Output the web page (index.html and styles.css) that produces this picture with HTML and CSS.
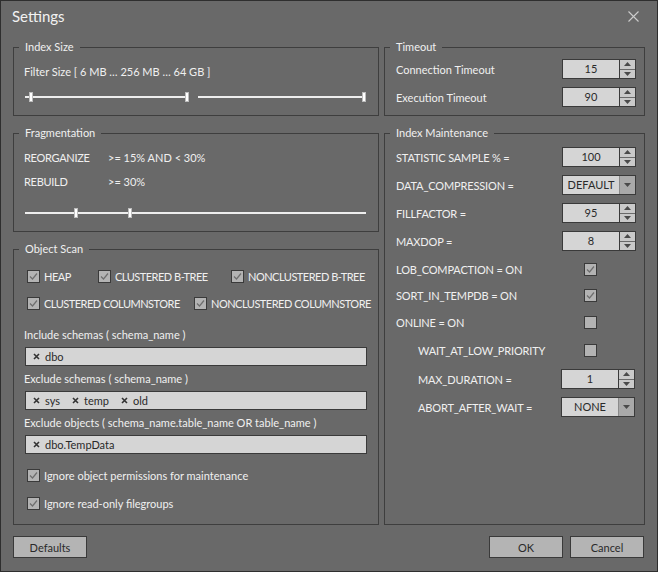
FILE: index.html
```html
<!DOCTYPE html>
<html>
<head>
<meta charset="utf-8">
<title>Settings</title>
<link rel="stylesheet" href="styles.css">
</head>
<body>
<div class="dialog">
  <div class="titlebar">
    <span class="title">Settings</span>
    <svg class="close" width="11" height="11" viewBox="0 0 11 11"><path d="M0.5 0.5L10.5 10.5M10.5 0.5L0.5 10.5"/></svg>
  </div>

  <div class="body">
    <div class="col col-left">
      <fieldset class="group">
        <legend>Index Size</legend>
        <div class="gb gb-index">
          <div class="row">Filter Size [ 6 MB … 256 MB … 64 GB ]</div>
          <div class="row slider-row">
            <div class="slider s-a"><span class="thumb" style="left:4px"></span><span class="thumb" style="right:0"></span></div>
            <div class="slider s-b"><span class="thumb" style="right:0"></span></div>
          </div>
        </div>
      </fieldset>

      <fieldset class="group">
        <legend>Fragmentation</legend>
        <div class="gb gb-frag">
          <div class="row frag-row"><span class="caps">REORGANIZE</span><span>&gt;= 15% AND &lt; 30%</span></div>
          <div class="row frag-row frag-row-2"><span class="caps">REBUILD</span><span>&gt;= 30%</span></div>
          <div class="row frag-slider">
            <div class="slider s-full"><span class="thumb" style="left:49px"></span><span class="thumb" style="left:103px"></span></div>
          </div>
        </div>
      </fieldset>

      <fieldset class="group">
        <legend>Object Scan</legend>
        <div class="gb gb-scan">
          <div class="cb-row cb-row-1 caps-tight">
            <label class="check"><span class="cb"><svg viewBox="0 0 11 11" width="11" height="11"><path d="M2 5.5L4.5 8L9 2.5"/></svg></span>HEAP</label>
            <label class="check"><span class="cb"><svg viewBox="0 0 11 11" width="11" height="11"><path d="M2 5.5L4.5 8L9 2.5"/></svg></span>CLUSTERED B-TREE</label>
            <label class="check"><span class="cb"><svg viewBox="0 0 11 11" width="11" height="11"><path d="M2 5.5L4.5 8L9 2.5"/></svg></span>NONCLUSTERED B-TREE</label>
          </div>
          <div class="cb-row cb-row-2 caps-tight">
            <label class="check"><span class="cb"><svg viewBox="0 0 11 11" width="11" height="11"><path d="M2 5.5L4.5 8L9 2.5"/></svg></span>CLUSTERED COLUMNSTORE</label>
            <label class="check"><span class="cb"><svg viewBox="0 0 11 11" width="11" height="11"><path d="M2 5.5L4.5 8L9 2.5"/></svg></span>NONCLUSTERED COLUMNSTORE</label>
          </div>

          <div class="field-label first">Include schemas ( schema_name )</div>
          <div class="tags">
            <span class="tag"><svg class="x" width="7" height="7" viewBox="0 0 7 7"><path d="M1 1L6 6M6 1L1 6"/></svg>dbo</span>
          </div>

          <div class="field-label">Exclude schemas ( schema_name )</div>
          <div class="tags">
            <span class="tag"><svg class="x" width="7" height="7" viewBox="0 0 7 7"><path d="M1 1L6 6M6 1L1 6"/></svg>sys</span>
            <span class="tag"><svg class="x" width="7" height="7" viewBox="0 0 7 7"><path d="M1 1L6 6M6 1L1 6"/></svg>temp</span>
            <span class="tag"><svg class="x" width="7" height="7" viewBox="0 0 7 7"><path d="M1 1L6 6M6 1L1 6"/></svg>old</span>
          </div>

          <div class="field-label">Exclude objects ( schema_name.table_name OR table_name )</div>
          <div class="tags">
            <span class="tag"><svg class="x" width="7" height="7" viewBox="0 0 7 7"><path d="M1 1L6 6M6 1L1 6"/></svg>dbo.TempData</span>
          </div>

          <div class="cb-row opt opt-1">
            <label class="check"><span class="cb"><svg viewBox="0 0 11 11" width="11" height="11"><path d="M2 5.5L4.5 8L9 2.5"/></svg></span>Ignore object permissions for maintenance</label>
          </div>
          <div class="cb-row opt opt-2">
            <label class="check"><span class="cb"><svg viewBox="0 0 11 11" width="11" height="11"><path d="M2 5.5L4.5 8L9 2.5"/></svg></span>Ignore read-only filegroups</label>
          </div>
        </div>
      </fieldset>
    </div>

    <div class="col col-right">
      <fieldset class="group">
        <legend>Timeout</legend>
        <div class="gb gb-timeout">
          <div class="mrow">
            <span>Connection Timeout</span>
            <div class="spin"><span class="spin-val">15</span><span class="spin-btns"><span><svg width="7" height="4" viewBox="0 0 7 4"><path d="M0 4L3.5 0L7 4Z"/></svg></span><span><svg width="7" height="4" viewBox="0 0 7 4"><path d="M0 0L3.5 4L7 0Z"/></svg></span></span></div>
          </div>
          <div class="mrow m8">
            <span>Execution Timeout</span>
            <div class="spin"><span class="spin-val">90</span><span class="spin-btns"><span><svg width="7" height="4" viewBox="0 0 7 4"><path d="M0 4L3.5 0L7 4Z"/></svg></span><span><svg width="7" height="4" viewBox="0 0 7 4"><path d="M0 0L3.5 4L7 0Z"/></svg></span></span></div>
          </div>
        </div>
      </fieldset>

      <fieldset class="group grow">
        <legend>Index Maintenance</legend>
        <div class="gb gb-maint caps-soft">
          <div class="mrow">
            <span>STATISTIC SAMPLE % =</span>
            <div class="spin"><span class="spin-val">100</span><span class="spin-btns"><span><svg width="7" height="4" viewBox="0 0 7 4"><path d="M0 4L3.5 0L7 4Z"/></svg></span><span><svg width="7" height="4" viewBox="0 0 7 4"><path d="M0 0L3.5 4L7 0Z"/></svg></span></span></div>
          </div>
          <div class="mrow m8">
            <span>DATA_COMPRESSION =</span>
            <div class="combo"><span class="combo-val">DEFAULT</span><span class="combo-btn"><svg width="7" height="4" viewBox="0 0 7 4"><path d="M0 0L3.5 4L7 0Z"/></svg></span></div>
          </div>
          <div class="mrow m8">
            <span>FILLFACTOR =</span>
            <div class="spin"><span class="spin-val">95</span><span class="spin-btns"><span><svg width="7" height="4" viewBox="0 0 7 4"><path d="M0 4L3.5 0L7 4Z"/></svg></span><span><svg width="7" height="4" viewBox="0 0 7 4"><path d="M0 0L3.5 4L7 0Z"/></svg></span></span></div>
          </div>
          <div class="mrow m8">
            <span>MAXDOP =</span>
            <div class="spin"><span class="spin-val">8</span><span class="spin-btns"><span><svg width="7" height="4" viewBox="0 0 7 4"><path d="M0 4L3.5 0L7 4Z"/></svg></span><span><svg width="7" height="4" viewBox="0 0 7 4"><path d="M0 0L3.5 4L7 0Z"/></svg></span></span></div>
          </div>
          <div class="mrow m8">
            <span>LOB_COMPACTION = ON</span>
            <div class="cb-cell"><span class="cb"><svg viewBox="0 0 11 11" width="11" height="11"><path d="M2 5.5L4.5 8L9 2.5"/></svg></span></div>
          </div>
          <div class="mrow m6">
            <span>SORT_IN_TEMPDB = ON</span>
            <div class="cb-cell"><span class="cb"><svg viewBox="0 0 11 11" width="11" height="11"><path d="M2 5.5L4.5 8L9 2.5"/></svg></span></div>
          </div>
          <div class="mrow m7">
            <span>ONLINE = ON</span>
            <div class="cb-cell"><span class="cb"></span></div>
          </div>
          <div class="mrow m8 indent">
            <span>WAIT_AT_LOW_PRIORITY</span>
            <div class="cb-cell"><span class="cb"></span></div>
          </div>
          <div class="mrow m9 indent">
            <span>MAX_DURATION =</span>
            <div class="spin shift"><span class="spin-val">1</span><span class="spin-btns"><span><svg width="7" height="4" viewBox="0 0 7 4"><path d="M0 4L3.5 0L7 4Z"/></svg></span><span><svg width="7" height="4" viewBox="0 0 7 4"><path d="M0 0L3.5 4L7 0Z"/></svg></span></span></div>
          </div>
          <div class="mrow m8 indent">
            <span>ABORT_AFTER_WAIT =</span>
            <div class="combo shift"><span class="combo-val">NONE</span><span class="combo-btn"><svg width="7" height="4" viewBox="0 0 7 4"><path d="M0 0L3.5 4L7 0Z"/></svg></span></div>
          </div>
        </div>
      </fieldset>
    </div>
  </div>

  <div class="footer">
    <button class="btn btn-defaults">Defaults</button>
    <button class="btn">OK</button>
    <button class="btn">Cancel</button>
  </div>
</div>
</body>
</html>
```

FILE: styles.css
```css
* { box-sizing: border-box; }
html, body { margin: 0; padding: 0; }
body {
  background: #696969;
  font-family: Lato, "Liberation Sans", sans-serif;
  font-size: 11px;
  color: #f0f0f0;
}
.dialog {
  width: 658px;
  height: 572px;
  border: 1px solid #2e2e2e;
  display: flex;
  flex-direction: column;
}
.titlebar {
  height: 39px;
  flex: none;
  display: flex;
  justify-content: space-between;
  align-items: flex-start;
  padding: 6px 18px 0 11px;
}
.title { font-size: 15px; line-height: 18px; color: #f2f2f2; }
.close { margin-top: 4px; fill: none; stroke: #cdcdcd; stroke-width: 1.1; }

.body { display: flex; gap: 5px; padding: 0 12px; }
.col { display: flex; flex-direction: column; gap: 10px; }
.col-left { width: 366px; }
.col-right { width: 261px; }

.group {
  margin: 0;
  padding: 0;
  border: 1px solid #3e3e3e;
  min-width: 0;
}
.group legend {
  margin-left: 5px;
  padding: 0 6px;
  line-height: 14px;
  color: #f0f0f0;
}
.grow { flex: 1; }
.gb { display: flex; flex-direction: column; }

.row { height: 20px; display: flex; align-items: center; }
.caps { letter-spacing: -0.3px; }
.caps-tight { letter-spacing: -0.5px; }
.caps-soft > .mrow > span:first-child { letter-spacing: -0.15px; }

/* Index size */
.gb-index { padding: 7px 11px 8px 10px; }
.slider-row { margin-top: 6px; gap: 9px; padding-left: 1px; align-items: stretch; }
.slider {
  position: relative;
  height: 20px;
  background: linear-gradient(#eeeeee, #eeeeee) 0 9px / 100% 2px no-repeat;
}
.s-a { width: 164px; flex: none; }
.s-b { flex: 1; margin-right: 1px; }
.s-full { flex: 1; margin-left: 1px; margin-right: 1px; }
.thumb {
  position: absolute;
  top: 5px;
  width: 4px;
  height: 10px;
  background: #ffffff;
  border: 1px solid #bdbdbd;
}

/* Fragmentation */
.gb-frag { padding: 7px 11px 8px 10px; }
.frag-row { display: grid; grid-template-columns: 84px auto; align-items: center; }
.frag-row-2 { margin-top: 4px; }
.frag-slider { margin-top: 12px; align-items: stretch; }

/* Object scan */
.gb-scan { padding: 10px 11px 11px 10px; }
.cb-row { display: grid; height: 20px; align-items: center; padding-left: 3px; }
.cb-row-1 { grid-template-columns: 71px 133px auto; }
.cb-row-2 { grid-template-columns: 167px auto; margin-top: 7px; }
.opt-1 { margin-top: 11px; }
.opt-2 { margin-top: 8px; }
.check { display: flex; align-items: center; gap: 4px; white-space: nowrap; }
.cb {
  width: 13px;
  height: 13px;
  flex: none;
  border: 1px solid #3a3a3a;
  background: #b3b3b3;
  display: inline-flex;
  align-items: center;
  justify-content: center;
}
.cb svg path { fill: none; stroke: #6e6e6e; stroke-width: 1.2; }

.field-label { height: 16px; line-height: 16px; margin-top: 5px; }
.field-label.first { margin-top: 14px; }
.tags {
  height: 19px;
  width: 342px;
  margin: 4px 0 0 1px;
  border: 1px solid #3a3a3a;
  background: #d5d5d5;
  color: #2a2a2a;
  display: flex;
  align-items: center;
  gap: 12px;
  padding-left: 7px;
}
.tag { display: flex; align-items: center; gap: 5px; }
.x path { stroke: #333333; stroke-width: 1.6; fill: none; }

/* Right column rows */
.gb-timeout { padding: 5px 8px 8px 11px; }
.gb-maint { padding: 7px 8px 0 11px; }
.mrow {
  height: 20px;
  display: grid;
  grid-template-columns: 1fr 74px;
  align-items: center;
}
.m6 { margin-top: 6px; }
.m7 { margin-top: 7px; }
.m8 { margin-top: 8px; }
.m9 { margin-top: 9px; }
.indent > span:first-child { padding-left: 22px; }
.shift { margin-left: -1px; }

.spin { display: flex; width: 74px; height: 20px; }
.spin-val {
  flex: 1;
  border: 1px solid #3a3a3a;
  background: #d5d5d5;
  color: #2a2a2a;
  text-align: center;
  line-height: 18px;
}
.spin-btns {
  width: 16px;
  display: flex;
  flex-direction: column;
  border: 1px solid #3a3a3a;
  border-left: none;
}
.spin-btns > span {
  flex: 1;
  background: #c9c9c9;
  display: flex;
  align-items: center;
  justify-content: center;
}
.spin-btns > span + span { border-top: 1px solid #6a6a6a; }
.spin-btns path, .combo-btn path { fill: #4a4a4a; }

.combo { display: flex; width: 74px; height: 20px; border: 1px solid #3a3a3a; }
.combo-val {
  flex: 1;
  background: #d5d5d5;
  color: #2a2a2a;
  text-align: center;
  line-height: 18px;
}
.combo-btn {
  width: 16px;
  background: #a9a9a9;
  border-left: 1px solid #8a8a8a;
  display: flex;
  align-items: center;
  justify-content: center;
}
.cb-cell { display: flex; align-items: center; padding-left: 22px; }

/* Footer */
.footer { display: flex; gap: 7px; padding: 0 13px 0 12px; margin-top: 11px; }
.btn {
  width: 74px;
  height: 22px;
  margin: 0;
  padding: 0;
  border: 1px solid #3a3a3a;
  background: #b4b4b4;
  color: #2a2a2a;
  font-family: Lato, "Liberation Sans", sans-serif;
  font-size: 11px;
}
.btn-defaults { margin-right: auto; }
```
